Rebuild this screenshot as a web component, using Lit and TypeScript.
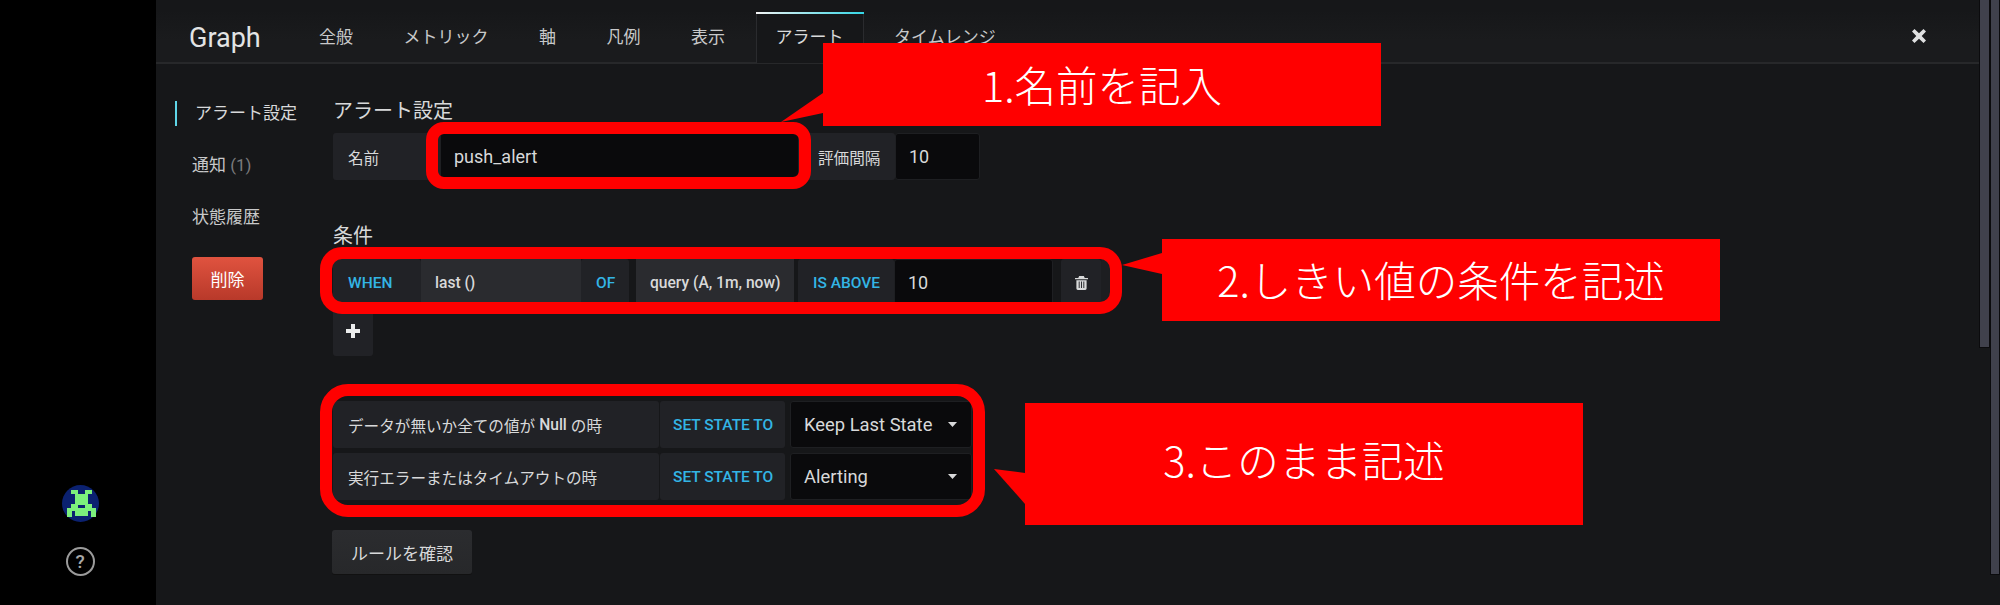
import { LitElement, html, css } from "lit";
import { customElement } from "lit/decorators.js";

@customElement("app-root")
export class AppRoot extends LitElement {
  static styles = css`
    :host { display: block; width: 2000px; height: 605px; font-family: Roboto, "Noto Sans CJK JP", sans-serif; }
    * { box-sizing: border-box; }
    .app { position: relative; display: flex; width: 2000px; height: 605px; overflow: hidden; background: #161719; color: #d8d9da; font-size: 16px; }
    .rail { width: 156px; flex: none; background: #000; display: flex; flex-direction: column; align-items: center; padding: 485px 0 0 4px; }
    .avatar { width: 37px; height: 37px; display: block; }
    .help { width: 29px; height: 29px; margin-top: 25px; border: 2px solid #9b9b9b; border-radius: 50%; color: #a8a8a8; font-size: 19px; font-weight: 500; display: flex; align-items: center; justify-content: center; }
    .main { flex: 1; display: flex; flex-direction: column; min-width: 0; }
    .head { height: 64px; flex: none; display: flex; align-items: flex-end; padding-left: 33px; border-bottom: 2px solid #27282a; position: relative; background: linear-gradient(180deg, #161719 10px, #1a1b1d 40px, #1a1b1d); }
    .title { width: 110px; font-size: 27px; line-height: 76px; height: 62px; color: #e3e4e5; }
    .tabs { display: flex; gap: 10.5px; height: 50px; }
    .tab { padding: 0 20px; font-size: 17px; line-height: 50px; color: #c8c9ca; white-space: nowrap; }
    .tab.on { position: relative; border: 1px solid #2a2b2e; border-bottom: 0; background: #161719; color: #d8d9da; padding: 0 19px; line-height: 48px; height: 51px; margin-bottom: -2px; }
    .tab.on::before { content: ""; position: absolute; left: -1px; right: -1px; top: -1px; height: 2px; background: linear-gradient(90deg, #f4f4f4, #33d6e5); }
    .close { position: absolute; left: 1755px; top: 28px; width: 16px; height: 16px; }
    .body { display: flex; flex: 1; }
    .nav { width: 158px; margin-left: 19px; padding-top: 37px; flex: none; }
    .nav-item { font-size: 17px; color: #c8c9ca; display: block; height: 25px; line-height: 25px; padding-left: 17px; margin-bottom: 27px; }
    .nav-item.on { border-left: 2px solid #5fd6e8; padding-left: 18px; color: #d8d9da; }
    .muted { color: #7b7b7e; }
    .del { display: flex; align-items: center; justify-content: center; margin: 14px 0 0 17px; width: 71px; height: 43px; border-radius: 3px; background: linear-gradient(180deg, #e0533f, #b8392a); color: #fff; font-size: 17px; }
    .form { flex: 1; padding-top: 33px; }
    h2 { margin: 0; font-weight: 400; font-size: 20px; line-height: 29px; height: 29px; color: #d8d9da; }
    .row { display: flex; height: 47px; font-size: 15.6px; }
    .r1 { margin-top: 7px; }
    .sec2 { margin-top: 42px; }
    .r2 { margin-top: 8px; }
    .seg { display: flex; align-items: center; padding-left: 15px; white-space: nowrap; background: #212226; border-radius: 3px; flex: none; }
    .lt { background: #2a2b2f; font-weight: 500; padding-left: 14px; border-radius: 0; }
    .inp { background: #0a0a0c; color: #d8d9da; font-size: 18px; padding-left: 13px; border: 1px solid #1e1f22; border-radius: 3px; flex: none; display: flex; align-items: center; }
    .blue { color: #33b5e5; font-weight: 500; font-size: 15.5px; }
    .gap4 { margin-left: 4px; }
    .w107 { width: 107px; } .w359 { width: 359px; } .w92 { width: 92px; } .w85 { width: 85px; }
    .w88 { width: 88px; } .w160 { width: 160px; } .w48 { width: 48px; } .w158 { width: 158px; } .w96 { width: 96px; } .w159 { width: 159px; }
    .ml7 { margin-left: 7px; } .ml8 { margin-left: 8px; }
    .trash { width: 40px; padding: 0; justify-content: center; }
    .fill { width: 9px; padding: 0; background: #1d1e21; }
    .plus { width: 40px; height: 46px; margin-top: 4px; background: #212226; display: flex; align-items: center; justify-content: center; border-radius: 0 0 3px 3px; padding-bottom: 4px; }
    .states { margin-top: 45px; display: flex; flex-direction: column; gap: 5px; }
    .w326 { width: 326px; } .w125 { width: 125px; padding-left: 13px; } .w182 { width: 182px; }
    .ml1 { margin-left: 1px; } .ml5 { margin-left: 5px; }
    .sel { justify-content: space-between; padding-right: 14px; font-size: 18.4px; padding-left: 13px; }
    .arrow { width: 9px; height: 5px; flex: none; }
    .w326 b { font-weight: 500; margin: 0 4px; }
    .check { margin: 30px 0 0 -1px; width: 140px; height: 44px; background: linear-gradient(180deg, #2b2c2f, #27282a); border-radius: 3px; display: flex; align-items: center; justify-content: center; font-size: 17px; color: #d8d9da; box-shadow: 0 1px 0 #111; }
    .scroll { width: 21px; flex: none; background: #161719; display: flex; align-items: flex-start; }
    .scroll i { display: block; background: #40414c; border: 1px solid #0b0b0d; border-top: 0; }
    .scroll .a { width: 11px; height: 348px; }
    .scroll .b { width: 10px; height: 575px; }
    .ring { position: absolute; border: 12px solid #f00; }
    .ring1 { left: 426px; top: 122px; width: 385px; height: 67px; border-radius: 18px; }
    .ring2 { left: 320px; top: 247px; width: 802px; height: 67px; border-radius: 22px; }
    .ring3 { left: 320px; top: 384px; width: 665px; height: 133px; border-radius: 28px; }
    .call { position: absolute; background: #f00; color: #fff; font-family: "Noto Sans CJK JP", sans-serif; font-weight: 300; font-size: 41.5px; display: flex; align-items: center; justify-content: center; white-space: nowrap; padding-bottom: 2px; }
    .c1 { left: 823px; top: 43px; width: 558px; height: 83px; }
    .c2 { left: 1162px; top: 239px; width: 558px; height: 82px; }
    .c3 { left: 1025px; top: 403px; width: 558px; height: 122px; padding-bottom: 10px; }
    .tails { position: absolute; left: 0; top: 0; width: 2000px; height: 605px; pointer-events: none; }
  `;

  render() {
    const caret = html`<svg class="arrow" viewBox="0 0 9 5"><path d="M0 0h9L4.500 5z" fill="#d8d9da"/></svg>`;
    return html`
      <div class="app">
        <div class="rail">
          <svg class="avatar" viewBox="0 0 37 37">
            <circle cx="18.500" cy="18.500" r="18.500" fill="#0b2170"/>
            <path fill="#7cf07c" d="M9 5h7v4h7V5h7v4h-4v10h4v4h4v9h-5v-6h-3v5H13v-5h-3v6H5v-9h4v-4h4V9H9z"/>
            <path fill="#0b2170" d="M16 20h7v3h-7z"/>
          </svg>
          <div class="help">?</div>
        </div>
        <div class="main">
          <div class="head">
            <div class="title">Graph</div>
            <div class="tabs">
              <div class="tab">全般</div>
              <div class="tab">メトリック</div>
              <div class="tab">軸</div>
              <div class="tab">凡例</div>
              <div class="tab">表示</div>
              <div class="tab on">アラート</div>
              <div class="tab">タイムレンジ</div>
            </div>
            <svg class="close" viewBox="0 0 16 16"><path d="M3.500 1 8 5.300 12.500 1 15 3.500 10.700 8 15 12.500 12.500 15 8 10.700 3.500 15 1 12.500 5.300 8 1 3.500z" fill="#dfe0e1"/></svg>
          </div>
          <div class="body">
            <div class="nav">
              <div class="nav-item on">アラート設定</div>
              <div class="nav-item">通知 <span class="muted">(1)</span></div>
              <div class="nav-item">状態履歴</div>
              <div class="del">削除</div>
            </div>
            <div class="form">
              <h2>アラート設定</h2>
              <div class="row r1">
                <div class="seg w107">名前</div>
                <div class="inp w359">push_alert</div>
                <div class="seg gap4 w92">評価間隔</div>
                <div class="inp w85">10</div>
              </div>
              <h2 class="sec2">条件</h2>
              <div class="row r2">
                <div class="seg w88 blue">WHEN</div>
                <div class="seg w160 lt">last ()</div>
                <div class="seg w48 blue">OF</div>
                <div class="seg ml7 w158 lt">query (A, 1m, now)</div>
                <div class="seg gap4 w96 blue">IS ABOVE</div>
                <div class="inp w159">10</div>
                <div class="seg ml8 trash">
                  <svg width="13" height="14" viewBox="0 0 14 15"><path fill-rule="evenodd" fill="#d8d9da" d="M4.500 0h5l1 2H14v1.500H0V2h3.500zM1.500 4.500h11V13.500a1.500 1.500 0 0 1-1.500 1.500H3a1.500 1.500 0 0 1-1.500-1.500zM4 6v7h1V6zM6.500 6v7h1V6zM9 6v7h1V6z"/></svg>
                </div>
                <div class="seg fill"></div>
              </div>
              <div class="plus">
                <svg width="14" height="14" viewBox="0 0 14 14"><path d="M5 0h4v5h5v4H9v5H5V9H0V5h5z" fill="#eceded"/></svg>
              </div>
              <div class="states">
                <div class="row">
                  <div class="seg w326">データが無いか全ての値が<b>Null</b>の時</div>
                  <div class="seg ml1 w125 blue">SET STATE TO</div>
                  <div class="inp sel ml5 w182">Keep Last State ${caret}</div>
                </div>
                <div class="row">
                  <div class="seg w326">実行エラーまたはタイムアウトの時</div>
                  <div class="seg ml1 w125 blue">SET STATE TO</div>
                  <div class="inp sel ml5 w182">Alerting ${caret}</div>
                </div>
              </div>
              <div class="check">ルールを確認</div>
            </div>
          </div>
        </div>
        <div class="scroll"><i class="a"></i><i class="b"></i></div>

        <div class="ring ring1"></div>
        <div class="ring ring2"></div>
        <div class="ring ring3"></div>
        <svg class="tails" viewBox="0 0 2000 605">
          <path fill="#f00" d="M823 93 781 122 823 113z"/>
          <path fill="#f00" d="M1162 253 1122 265 1162 274z"/>
          <path fill="#f00" d="M1025 473 994 469 1025 504z"/>
        </svg>
        <div class="call c1">1.名前を記入</div>
        <div class="call c2">2.しきい値の条件を記述</div>
        <div class="call c3">3.このまま記述</div>
      </div>
    `;
  }
}
